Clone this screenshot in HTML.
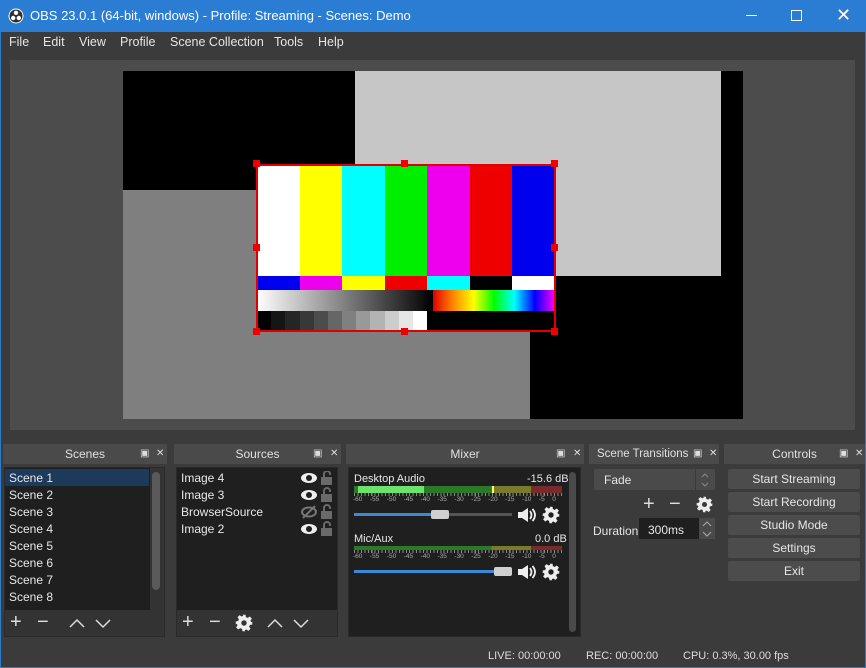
<!DOCTYPE html>
<html><head><meta charset="utf-8"><style>
*{margin:0;padding:0;box-sizing:border-box}
body{width:866px;height:668px;background:#3b3b3b;font-family:"Liberation Sans",sans-serif;color:#dcdcdc;position:relative;overflow:hidden;font-size:12px}
.a{position:absolute}
.title{left:0;top:0;width:866px;height:32px;background:#2b7cd3;color:#fff;font-size:13px}
.menu span{position:absolute;top:35px;font-size:12.5px;color:#e6e6e6}
.hdr{top:444px;height:20px;background:#4a4a4a;text-align:center;line-height:20px;font-size:12px;color:#e0e0e0}
.hdr i{position:absolute;top:0;font-style:normal;font-size:10px;color:#ddd}
.list{background:#1f1f1f}
.item{position:absolute;left:6px;font-size:12px;color:#e8e8e8}
.btn{position:absolute;left:728px;width:132px;height:20px;background:#4c4c4c;border-radius:2px;text-align:center;line-height:20px;font-size:12px;color:#e6e6e6}
.tb{position:absolute;font-size:20px;color:#ddd;line-height:20px}
</style></head><body>
<div class="a" style="left:0;top:0;width:866px;height:668px;border:1px solid #2b7cd3;border-top:none"></div>
<div class="a title">
<svg class="a" style="left:8px;top:8px" width="16" height="16" viewBox="0 0 16 16"><circle cx="8" cy="8" r="7.5" fill="#fff"/><circle cx="8" cy="8" r="6.5" fill="#302e31"/><circle cx="8" cy="4.8" r="2.2" fill="#fff"/><circle cx="5.2" cy="10" r="2.2" fill="#fff"/><circle cx="10.8" cy="10" r="2.2" fill="#fff"/></svg>
<span class="a" style="left:30px;top:8px">OBS 23.0.1 (64-bit, windows) - Profile: Streaming - Scenes: Demo</span>
<div class="a" style="left:746px;top:15px;width:11px;height:1px;background:#fff"></div>
<div class="a" style="left:791px;top:10px;width:11px;height:11px;border:1px solid #fff"></div>
<span class="a" style="left:836px;top:5px;font-size:18px">✕</span>
</div>
<div class="menu"><span style="left:9px">File</span><span style="left:43px">Edit</span><span style="left:79px">View</span><span style="left:120px">Profile</span><span style="left:170px">Scene Collection</span><span style="left:274px">Tools</span><span style="left:318px">Help</span></div>
<!-- preview -->
<div class="a" style="left:10px;top:60px;width:845px;height:370px;background:#4c4c4c"></div>
<div class="a" style="left:123px;top:71px;width:620px;height:348px;background:#000"></div>
<div class="a" style="left:355px;top:71px;width:366px;height:205px;background:#c6c6c6"></div>
<div class="a" style="left:123px;top:190px;width:407px;height:229px;background:#7f7f7f"></div>
<div class="a" style="left:530px;top:276px;width:213px;height:143px;background:#000"></div>
<!-- bars -->
<div class="a" style="left:257px;top:165px;width:298px;height:166px;background:#000;display:flex;flex-direction:column">
<div style="display:flex;height:111px"><div style="flex:1;background:#fff"></div><div style="flex:1;background:#ffff00"></div><div style="flex:1;background:#00ffff"></div><div style="flex:1;background:#00ee00"></div><div style="flex:1;background:#ee00ee"></div><div style="flex:1;background:#ee0000"></div><div style="flex:1;background:#0000ee"></div></div>
<div style="display:flex;height:14px"><div style="flex:1;background:#0000ee"></div><div style="flex:1;background:#ee00ee"></div><div style="flex:1;background:#ffff00"></div><div style="flex:1;background:#ee0000"></div><div style="flex:1;background:#00ffff"></div><div style="flex:1;background:#000"></div><div style="flex:1;background:#fff"></div></div>
<div style="display:flex;height:21px"><div style="width:176px;background:linear-gradient(90deg,#fff,#000)"></div><div style="flex:1;background:linear-gradient(90deg,#e00000,#ff8800,#ffff00,#00ff00,#00ffff,#0000ff,#ff00ff)"></div></div>
<div style="display:flex;height:20px;width:170px"><div style="flex:1;background:#000"></div><div style="flex:1;background:#151515"></div><div style="flex:1;background:#252525"></div><div style="flex:1;background:#383838"></div><div style="flex:1;background:#4c4c4c"></div><div style="flex:1;background:#666"></div><div style="flex:1;background:#808080"></div><div style="flex:1;background:#999"></div><div style="flex:1;background:#b3b3b3"></div><div style="flex:1;background:#ccc"></div><div style="flex:1;background:#e6e6e6"></div><div style="flex:1;background:#fff"></div></div>
</div>
<div class="a" style="left:256px;top:164px;width:300px;height:168px;border:2px solid #e00000"></div>
<div class="a" style="left:253px;top:160px;width:7px;height:7px;background:#e00"></div>
<div class="a" style="left:401px;top:160px;width:7px;height:7px;background:#e00"></div>
<div class="a" style="left:551px;top:160px;width:7px;height:7px;background:#e00"></div>
<div class="a" style="left:253px;top:244px;width:7px;height:7px;background:#e00"></div>
<div class="a" style="left:551px;top:244px;width:7px;height:7px;background:#e00"></div>
<div class="a" style="left:253px;top:328px;width:7px;height:7px;background:#e00"></div>
<div class="a" style="left:401px;top:328px;width:7px;height:7px;background:#e00"></div>
<div class="a" style="left:551px;top:328px;width:7px;height:7px;background:#e00"></div>
<!-- headers -->
<div class="a hdr" style="left:3px;width:164px">Scenes<i style="left:137px">▣</i><i style="left:153px">✕</i></div>
<div class="a hdr" style="left:174px;width:167px">Sources<i style="left:139px">▣</i><i style="left:156px">✕</i></div>
<div class="a hdr" style="left:346px;width:238px">Mixer<i style="left:210px">▣</i><i style="left:227px">✕</i></div>
<div class="a hdr" style="left:589px;width:130px;text-align:left;padding-left:8px;font-size:11.5px">Scene Transitions<i style="left:104px">▣</i><i style="left:120px">✕</i></div>
<div class="a hdr" style="left:724px;width:141px">Controls<i style="left:115px">▣</i><i style="left:131px">✕</i></div>
<!-- scenes -->
<div class="a" style="left:4px;top:467px;width:161px;height:170px;border:1px solid #2a2a2a;background:#333"></div>
<div class="a list" style="left:5px;top:468px;width:145px;height:142px;overflow:hidden"></div>
<div class="a" style="left:5px;top:469px;width:144px;height:17px;background:#1d3a5a"></div>
<div class="a" style="left:152px;top:472px;width:8px;height:118px;background:#5a5a5a;border-radius:4px"></div>
<div class="item" style="left:9px;top:471px">Scene 1</div><div class="item" style="left:9px;top:488px">Scene 2</div><div class="item" style="left:9px;top:505px">Scene 3</div><div class="item" style="left:9px;top:522px">Scene 4</div><div class="item" style="left:9px;top:539px">Scene 5</div><div class="item" style="left:9px;top:556px">Scene 6</div><div class="item" style="left:9px;top:573px">Scene 7</div><div class="item" style="left:9px;top:590px">Scene 8</div>
<div class="a" style="left:5px;top:610px;width:159px;height:26px;background:#333"></div>
<div class="tb" style="left:10px;top:612px">+</div><div class="tb" style="left:37px;top:612px">−</div>
<svg class="a" style="left:69px;top:617px" width="60" height="12"><path d="M1 10 L8 3 L15 10 M27 3 L34 10 L41 3" stroke="#ddd" stroke-width="1.5" fill="none"/></svg>
<!-- sources -->
<div class="a" style="left:176px;top:467px;width:162px;height:170px;border:1px solid #2a2a2a;background:#1f1f1f"></div>
<div class="item" style="left:181px;top:471px">Image 4</div><div class="item" style="left:181px;top:488px">Image 3</div><div class="item" style="left:181px;top:505px">BrowserSource</div><div class="item" style="left:181px;top:522px">Image 2</div>
<svg class="a" style="left:300px;top:471px" width="34" height="70">
<g fill="#eee"><ellipse cx="9" cy="7" rx="8" ry="5"/><ellipse cx="9" cy="24" rx="8" ry="5"/><ellipse cx="9" cy="58" rx="8" ry="5"/></g>
<g fill="#1f1f1f"><circle cx="9" cy="7" r="3"/><circle cx="9" cy="24" r="3"/><circle cx="9" cy="58" r="3"/></g>
<ellipse cx="9" cy="41" rx="7" ry="4.5" fill="none" stroke="#777" stroke-width="2"/><path d="M3 47 L15 35" stroke="#777" stroke-width="2"/>
<g fill="#6a6a6a"><rect x="21" y="6" width="11" height="8"/><rect x="21" y="23" width="11" height="8"/><rect x="21" y="40" width="11" height="8"/><rect x="21" y="57" width="11" height="8"/></g>
<g fill="none" stroke="#6a6a6a" stroke-width="2"><path d="M24 6 V3 a3 3 0 0 1 6 0 V4"/><path d="M24 23 V20 a3 3 0 0 1 6 0 V21"/><path d="M24 40 V37 a3 3 0 0 1 6 0 V38"/><path d="M24 57 V54 a3 3 0 0 1 6 0 V55"/></g>
</svg>
<div class="a" style="left:177px;top:610px;width:160px;height:26px;background:#333"></div>
<div class="tb" style="left:182px;top:612px">+</div><div class="tb" style="left:209px;top:612px">−</div>
<svg class="a" style="left:235px;top:614px" width="18" height="18" viewBox="0 0 24 24"><path fill="#eee" d="M10 1h4l.6 3.2 2.4 1 2.7-1.9 2.8 2.8-1.9 2.7 1 2.4L23 10v4l-3.2.6-1 2.4 1.9 2.7-2.8 2.8-2.7-1.9-2.4 1L14 23h-4l-.6-3.2-2.4-1-2.7 1.9-2.8-2.8 1.9-2.7-1-2.4L1 14v-4l3.2-.6 1-2.4-1.9-2.7 2.8-2.8 2.7 1.9 2.4-1z"/><circle cx="12" cy="12" r="3.6" fill="#333"/></svg>
<svg class="a" style="left:267px;top:617px" width="60" height="12"><path d="M1 10 L8 3 L15 10 M27 3 L34 10 L41 3" stroke="#ddd" stroke-width="1.5" fill="none"/></svg>
<!-- mixer -->
<div class="a" style="left:348px;top:467px;width:233px;height:170px;border:1px solid #2a2a2a;background:#1f1f1f"></div>
<div class="a" style="left:569px;top:472px;width:7px;height:160px;background:#4a4a4a;border-radius:4px"></div>
<div class="item" style="left:354px;top:473px;font-size:11px">Desktop Audio</div><div class="item" style="left:527px;top:473px;font-size:11px">-15.6 dB</div>
<div class="a" style="left:354px;top:486px;width:208px;height:7px;background:linear-gradient(90deg,#2a7a2a 0,#2a7a2a 66%,#7a7a2a 66%,#7a7a2a 85%,#7a2a2a 85%)"></div>
<div class="a" style="left:358px;top:486px;width:66px;height:7px;background:#6be36b"></div>
<div class="a" style="left:492px;top:486px;width:2px;height:7px;background:#ff6"></div>
<div class="a" style="left:354px;top:493px;width:208px;height:3px;background:repeating-linear-gradient(90deg,#888 0 1px,transparent 1px 3.45px)"></div>
<div class="a" style="left:353px;top:496px;font-size:6.5px;color:#aaa;word-spacing:5.7px;white-space:nowrap">-60 -55 -50 -45 -40 -35 -30 -25 -20 -15 -10 -5 0</div>
<div class="a" style="left:354px;top:513px;width:158px;height:3px;background:#555"></div>
<div class="a" style="left:354px;top:513px;width:80px;height:3px;background:#3a8ad6"></div>
<div class="a" style="left:431px;top:510px;width:18px;height:9px;background:#d0d0d0;border-radius:2px"></div>
<div class="a" style="left:354px;top:533px;font-size:11px;color:#e8e8e8">Mic/Aux</div><div class="a" style="left:535px;top:533px;font-size:11px;color:#e8e8e8">0.0 dB</div>
<div class="a" style="left:354px;top:546px;width:208px;height:4px;background:linear-gradient(90deg,#2a7a2a 0,#2a7a2a 66%,#7a7a2a 66%,#7a7a2a 85%,#7a2a2a 85%)"></div>
<div class="a" style="left:354px;top:550px;width:208px;height:3px;background:repeating-linear-gradient(90deg,#888 0 1px,transparent 1px 3.45px)"></div>
<div class="a" style="left:353px;top:553px;font-size:6.5px;color:#aaa;word-spacing:5.7px;white-space:nowrap">-60 -55 -50 -45 -40 -35 -30 -25 -20 -15 -10 -5 0</div>
<div class="a" style="left:354px;top:570px;width:145px;height:3px;background:#3a8ad6"></div>
<div class="a" style="left:494px;top:567px;width:18px;height:9px;background:#d0d0d0;border-radius:2px"></div>
<svg class="a" style="left:517px;top:507px" width="20" height="16"><path d="M1 5h4l6-4v14l-6-4H1z" fill="#eee"/><path d="M13 4q3 4 0 8M15.5 2q5 6 0 12" stroke="#eee" stroke-width="1.8" fill="none"/></svg>
<svg class="a" style="left:517px;top:564px" width="20" height="16"><path d="M1 5h4l6-4v14l-6-4H1z" fill="#eee"/><path d="M13 4q3 4 0 8M15.5 2q5 6 0 12" stroke="#eee" stroke-width="1.8" fill="none"/></svg>
<svg class="a" style="left:542px;top:506px" width="18" height="18" viewBox="0 0 24 24"><path fill="#eee" d="M10 1h4l.6 3.2 2.4 1 2.7-1.9 2.8 2.8-1.9 2.7 1 2.4L23 10v4l-3.2.6-1 2.4 1.9 2.7-2.8 2.8-2.7-1.9-2.4 1L14 23h-4l-.6-3.2-2.4-1-2.7 1.9-2.8-2.8 1.9-2.7-1-2.4L1 14v-4l3.2-.6 1-2.4-1.9-2.7 2.8-2.8 2.7 1.9 2.4-1z"/><circle cx="12" cy="12" r="3.6" fill="#1f1f1f"/></svg>
<svg class="a" style="left:542px;top:563px" width="18" height="18" viewBox="0 0 24 24"><path fill="#eee" d="M10 1h4l.6 3.2 2.4 1 2.7-1.9 2.8 2.8-1.9 2.7 1 2.4L23 10v4l-3.2.6-1 2.4 1.9 2.7-2.8 2.8-2.7-1.9-2.4 1L14 23h-4l-.6-3.2-2.4-1-2.7 1.9-2.8-2.8 1.9-2.7-1-2.4L1 14v-4l3.2-.6 1-2.4-1.9-2.7 2.8-2.8 2.7 1.9 2.4-1z"/><circle cx="12" cy="12" r="3.6" fill="#1f1f1f"/></svg>
<!-- transitions -->
<div class="a" style="left:594px;top:469px;width:121px;height:21px;background:#4a4a4a;border-radius:2px"></div>
<div class="a" style="left:695px;top:469px;width:1px;height:21px;background:#3a3a3a"></div>
<div class="a" style="left:604px;top:473px;font-size:12px;color:#e6e6e6">Fade</div>
<svg class="a" style="left:700px;top:472px" width="10" height="16"><path d="M2 5 L5 2 L8 5 M2 11 L5 14 L8 11" stroke="#888" stroke-width="1" fill="none"/></svg>
<div class="tb" style="left:643px;top:494px">+</div><div class="tb" style="left:669px;top:494px">−</div>
<svg class="a" style="left:696px;top:496px" width="17" height="17" viewBox="0 0 24 24"><path fill="#eee" d="M10 1h4l.6 3.2 2.4 1 2.7-1.9 2.8 2.8-1.9 2.7 1 2.4L23 10v4l-3.2.6-1 2.4 1.9 2.7-2.8 2.8-2.7-1.9-2.4 1L14 23h-4l-.6-3.2-2.4-1-2.7 1.9-2.8-2.8 1.9-2.7-1-2.4L1 14v-4l3.2-.6 1-2.4-1.9-2.7 2.8-2.8 2.7 1.9 2.4-1z"/><circle cx="12" cy="12" r="3.6" fill="#3b3b3b"/></svg>
<div class="a" style="left:593px;top:524px;font-size:12px;color:#e6e6e6">Duration</div>
<div class="a" style="left:639px;top:518px;width:60px;height:21px;background:#1f1f1f"></div>
<div class="a" style="left:648px;top:523px;font-size:12px;color:#e6e6e6">300ms</div>
<div class="a" style="left:699px;top:518px;width:16px;height:21px;background:#4a4a4a"></div>
<svg class="a" style="left:702px;top:520px" width="10" height="18"><path d="M1 6 L5 2 L9 6 M1 12 L5 16 L9 12" stroke="#aaa" stroke-width="1" fill="none"/></svg>
<!-- controls -->
<div class="btn" style="top:469px">Start Streaming</div>
<div class="btn" style="top:492px">Start Recording</div>
<div class="btn" style="top:515px">Studio Mode</div>
<div class="btn" style="top:538px">Settings</div>
<div class="btn" style="top:561px">Exit</div>
<!-- status -->
<div class="a" style="left:488px;top:650px;font-size:11px;color:#ddd">LIVE: 00:00:00</div>
<div class="a" style="left:586px;top:650px;font-size:11px;color:#ddd">REC: 00:00:00</div>
<div class="a" style="left:683px;top:650px;font-size:11px;color:#ddd">CPU: 0.3%, 30.00 fps</div>
</body></html>
